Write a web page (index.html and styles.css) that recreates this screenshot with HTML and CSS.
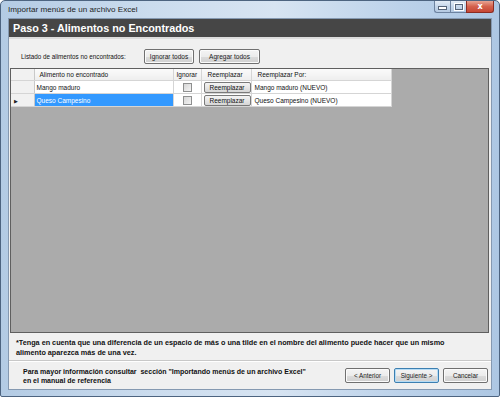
FILE: index.html
```html
<!DOCTYPE html>
<html lang="es">
<head>
  <meta charset="UTF-8" />
  <title>Importar menús de un archivo Excel</title>
  <link rel="stylesheet" href="styles.css">
</head>
<body>
  <div class="window">
    <div class="titlebar">
      <div class="title">Importar menús de un archivo Excel</div>
      <div class="controls">
        <div class="ctl ctl-min"><span class="min-glyph"></span></div>
        <div class="ctl ctl-max"><span class="max-glyph"></span></div>
        <div class="ctl ctl-close">x</div>
      </div>
    </div>

    <div class="client">
      <div class="step-header">Paso 3 - Alimentos no Encontrados</div>

      <div class="toolbar">
        <span class="label">Listado de alimentos no encontrados:</span>
        <button class="btn btn-ignore">Ignorar todos</button>
        <button class="btn btn-add">Agregar todos</button>
      </div>

      <div class="grid">
        <table class="grid-table">
          <colgroup>
            <col class="c-rowhead">
            <col class="c-name">
            <col class="c-ignore">
            <col class="c-replace">
            <col class="c-by">
          </colgroup>
          <thead>
            <tr>
              <th class="rowhead"></th>
              <th class="h-name">Alimento no encontrado</th>
              <th class="h-ignore">Ignorar</th>
              <th class="h-replace">Reemplazar</th>
              <th class="h-by">Reemplazar Por:</th>
            </tr>
          </thead>
          <tbody>
            <tr>
              <td class="rowhead"></td>
              <td class="cell-name">Mango maduro</td>
              <td class="cell-check"><span class="check"></span></td>
              <td class="cell-btn"><span class="row-btn">Reemplazar</span></td>
              <td class="cell-by">Mango maduro (NUEVO)</td>
            </tr>
            <tr>
              <td class="rowhead"><span class="current">&#9654;</span></td>
              <td class="cell-name selected">Queso Campesino</td>
              <td class="cell-check"><span class="check"></span></td>
              <td class="cell-btn"><span class="row-btn">Reemplazar</span></td>
              <td class="cell-by">Queso Campesino (NUEVO)</td>
            </tr>
          </tbody>
        </table>
      </div>

      <div class="note">
        *Tenga en cuenta que una diferencia de un espacio de más o una tilde en el nombre del alimento puede hacer que un mismo<br>
        alimento aparezca más de una vez.
      </div>

      <div class="footer">
        <div class="help">
          Para mayor información consultar&nbsp; sección "Importando menús de un archivo Excel"<br>
          en el manual de referencia
        </div>
        <div class="nav">
          <button class="btn btn-nav">&lt; Anterior</button>
          <button class="btn btn-nav btn-default">Siguiente &gt;</button>
          <button class="btn btn-nav">Cancelar</button>
        </div>
      </div>
    </div>
  </div>
</body>
</html>
```

FILE: styles.css
```css
body {
  margin: 0;
  width: 500px;
  height: 397px;
  overflow: hidden;
  background: #ffffff;
  font-family: "Liberation Sans", Arial, sans-serif;
}

.window {
  box-sizing: border-box;
  height: 397px;
  display: flex;
  flex-direction: column;
  padding: 0 7px 6px 7px;
  border: 1px solid #4d6480;
  border-radius: 5px 5px 2px 2px;
  background: linear-gradient(to right, #b3cbe4 0%, #cbdcee 30%, #d7e4f2 55%, #bcd2ea 80%, #adc7e3 100%);
}

/* title bar */
.titlebar {
  height: 17px;
  display: flex;
  align-items: flex-start;
  justify-content: space-between;
}

.title {
  font-family: "Liberation Sans", sans-serif;
  font-size: 8.1px;
  color: #1e1e1e;
  margin-top: 4px;
}

.controls {
  display: flex;
  margin-right: -2px;
}

.ctl {
  height: 12px;
  box-sizing: border-box;
  border: 1px solid #6d83a0;
  border-top: none;
  display: flex;
  align-items: center;
  justify-content: center;
}

.ctl-min,
.ctl-max {
  width: 16px;
  background: linear-gradient(#e3ecf6, #c5d6ea 50%, #b4c9e1);
  border-right: none;
}

.ctl-min {
  border-radius: 0 0 0 3px;
}

.min-glyph {
  width: 7px;
  height: 2px;
  margin-top: 3px;
  background: #ffffff;
  border: 1px solid #56657a;
}

.max-glyph {
  width: 6px;
  height: 4px;
  border: 1px solid #56657a;
  outline: 1px solid #ffffff;
}

.ctl-close {
  width: 28px;
  background: linear-gradient(#e8a493, #d4614c 50%, #c64634);
  border-color: #8b2c22;
  border-radius: 0 0 3px 0;
  color: #ffffff;
  font-family: "DejaVu Sans", sans-serif;
  font-weight: bold;
  font-size: 8px;
  line-height: 1;
}

/* client area */
.client {
  flex: 1;
  display: flex;
  flex-direction: column;
  background: #f0f0f0;
  border: 1px solid #8599b1;
}

.step-header {
  height: 20px;
  box-sizing: border-box;
  background: #464646;
  color: #ffffff;
  font-family: "Liberation Sans", sans-serif;
  font-weight: bold;
  font-size: 10.8px;
  padding: 3px 0 0 4px;
  border-bottom: 2px solid #dcdcdc;
}

.toolbar {
  height: 29px;
  box-sizing: border-box;
  display: flex;
  align-items: center;
  padding: 9px 0 4px 12px;
  font-size: 6.3px;
  color: #111111;
}

.label {
  width: 123px;
}

.btn {
  font-family: "Liberation Sans", sans-serif;
  font-size: 6.5px;
  color: #1a1a1a;
  height: 15px;
  padding: 0;
  border: 1px solid #707070;
  border-radius: 2px;
  background: linear-gradient(#f4f4f4, #ececec 50%, #dcdcdc 51%, #d0d0d0);
  box-shadow: inset 0 0 0 1px #fbfbfb;
}

.btn-ignore {
  width: 50px;
}

.btn-add {
  width: 61px;
  margin-left: 5px;
}

/* data grid */
.grid {
  flex: 1;
  margin: 0 2px 0 1px;
  background: #ababab;
  border: 1px solid #5f5f5f;
}

.grid-table {
  table-layout: fixed;
  border-collapse: collapse;
  width: 380px;
  font-size: 6.5px;
  color: #111111;
}

.c-rowhead { width: 23px; }
.c-name { width: 139px; }
.c-ignore { width: 28px; }
.c-replace { width: 50px; }
.c-by { width: 140px; }

.grid-table th {
  height: 11px;
  padding: 0;
  font-weight: normal;
  text-align: left;
  background: linear-gradient(#fbfbfb, #eeeeee);
  border-right: 1px solid #d5d5d5;
  border-bottom: 1px solid #d5d5d5;
}

.h-name { padding-left: 5px !important; }
.h-ignore { padding-left: 3px !important; }
.h-replace { padding-left: 6px !important; }
.h-by { padding-left: 6px !important; }

.grid-table td {
  height: 12px;
  padding: 0;
  background: #ffffff;
  border-right: 1px solid #d5d5d5;
  border-bottom: 1px solid #d5d5d5;
  white-space: nowrap;
}

.grid-table .rowhead {
  background: #f1f1f1;
  border-right: 1px solid #c9c9c9;
}

.current {
  font-size: 5px;
  color: #222222;
  padding-left: 3px;
}

.cell-name {
  padding-left: 2px !important;
}

.cell-name.selected {
  background: #3399ff !important;
  color: #ffffff;
}

.cell-check {
  text-align: center;
}

.check {
  display: inline-block;
  width: 7px;
  height: 7px;
  margin-top: 2px;
  border: 1px solid #8e8f8f;
  background: linear-gradient(135deg, #d6d6d6, #f4f4f4);
}

.cell-btn {
  padding-left: 2px !important;
}

.row-btn {
  display: block;
  box-sizing: border-box;
  width: 47px;
  height: 11px;
  line-height: 9px;
  text-align: center;
  border: 1px solid #7a7a7a;
  border-radius: 2px;
  background: linear-gradient(#f4f4f4, #e6e6e6 50%, #d6d6d6);
}

.cell-by {
  padding-left: 3px !important;
}

/* notes and footer */
.note {
  height: 28px;
  box-sizing: border-box;
  padding: 5px 0 0 7px;
  font-weight: bold;
  font-size: 7.25px;
  line-height: 10px;
  color: #111111;
  border-bottom: 1px solid #c8c8c8;
  box-shadow: 0 1px 0 #ffffff;
}

.footer {
  flex: 0 0 28px;
  display: flex;
  align-items: center;
  justify-content: space-between;
  padding: 0 3px 0 14px;
}

.help {
  font-weight: bold;
  font-size: 7px;
  line-height: 9px;
  color: #111111;
  padding-top: 1px;
}

.nav {
  display: flex;
  gap: 4px;
  padding-top: 1px;
}

.btn-nav {
  width: 45px;
  font-size: 6.3px;
}

.btn-default {
  border-color: #3c7fb1;
  box-shadow: inset 0 0 0 1px #b6dcf5;
}
```
